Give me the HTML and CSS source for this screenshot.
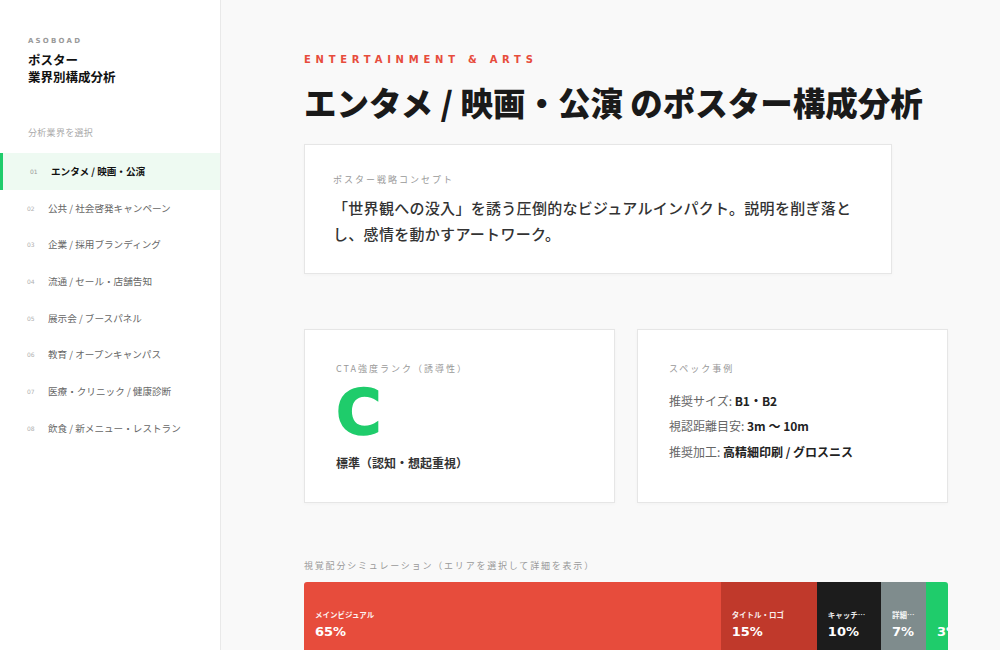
FILE: index.html
```html
<!DOCTYPE html>
<html lang="ja">
<head>
<meta charset="utf-8">
<title>ポスター 業界別構成分析</title>
<link rel="stylesheet" href="styles.css">
</head>
<body>
<div class="app">
  <aside class="sidebar">
    <div class="brand">ASOBOAD</div>
    <h1 class="app-title">ポスター<br>業界別構成分析</h1>
    <div class="nav-label">分析業界を選択</div>
    <nav class="nav">
      <a class="nav-item active"><span class="nav-num">01</span><span class="nav-text">エンタメ / 映画・公演</span></a>
      <a class="nav-item"><span class="nav-num">02</span><span class="nav-text">公共 / 社会啓発キャンペーン</span></a>
      <a class="nav-item"><span class="nav-num">03</span><span class="nav-text">企業 / 採用ブランディング</span></a>
      <a class="nav-item"><span class="nav-num">04</span><span class="nav-text">流通 / セール・店舗告知</span></a>
      <a class="nav-item"><span class="nav-num">05</span><span class="nav-text">展示会 / ブースパネル</span></a>
      <a class="nav-item"><span class="nav-num">06</span><span class="nav-text">教育 / オープンキャンパス</span></a>
      <a class="nav-item"><span class="nav-num">07</span><span class="nav-text">医療・クリニック / 健康診断</span></a>
      <a class="nav-item"><span class="nav-num">08</span><span class="nav-text">飲食 / 新メニュー・レストラン</span></a>
    </nav>
  </aside>

  <main class="main">
    <div class="content">
      <div class="eyebrow">ENTERTAINMENT &amp; ARTS</div>
      <h2 class="page-title">エンタメ / 映画・公演 のポスター構成分析</h2>

      <section class="card concept">
        <div class="card-label">ポスター戦略コンセプト</div>
        <p class="concept-text">「世界観への没入」を誘う圧倒的なビジュアルインパクト。説明を削ぎ落とし、感情を動かすアートワーク。</p>
      </section>

      <div class="grid">
        <section class="card metric">
          <div class="card-label">CTA強度ランク（誘導性）</div>
          <div class="rank">C</div>
          <div class="rank-note">標準（認知・想起重視）</div>
        </section>
        <section class="card metric">
          <div class="card-label">スペック事例</div>
          <ul class="spec-list">
            <li>推奨サイズ: <strong>B1・B2</strong></li>
            <li>視認距離目安: <strong>3m 〜 10m</strong></li>
            <li>推奨加工: <strong>高精細印刷 / グロスニス</strong></li>
          </ul>
        </section>
      </div>

      <div class="sim-label">視覚配分シミュレーション（エリアを選択して詳細を表示）</div>
      <div class="bar">
        <div class="seg seg-main" style="width:65%"><span class="seg-name">メインビジュアル</span><span class="seg-val">65%</span></div>
        <div class="seg seg-title" style="width:15%"><span class="seg-name">タイトル・ロゴ</span><span class="seg-val">15%</span></div>
        <div class="seg seg-catch" style="width:10%"><span class="seg-name">キャッチコピー</span><span class="seg-val">10%</span></div>
        <div class="seg seg-detail" style="width:7%"><span class="seg-name">詳細情報</span><span class="seg-val">7%</span></div>
        <div class="seg seg-cta" style="width:3%"><span class="seg-name">CTA</span><span class="seg-val">3%</span></div>
      </div>
    </div>
  </main>
</div>
</body>
</html>
```

FILE: styles.css
```css
* {
  box-sizing: border-box;
}

html,
body {
  margin: 0;
  height: 100%;
  overflow: hidden;
}

body {
  font-family: "Noto Sans CJK JP", "Noto Sans", sans-serif;
  color: #222;
  background: #f9f9f9;
}

.app {
  display: flex;
  height: 100%;
}

/* ---------- sidebar ---------- */
.sidebar {
  width: 221px;
  flex: none;
  background: #fff;
  border-right: 1px solid #e9e9e9;
  padding-top: 36px;
}

.brand {
  padding-left: 28px;
  font-family: "DejaVu Sans", sans-serif;
  font-weight: 700;
  font-size: 7px;
  line-height: 11px;
  letter-spacing: 2.2px;
  color: #9a9a9a;
}

.app-title {
  margin: 4px 0 0;
  padding-left: 28px;
  font-size: 12.5px;
  line-height: 17px;
  font-weight: 700;
  color: #111;
}

.nav-label {
  margin-top: 41px;
  padding-left: 28px;
  font-size: 9px;
  line-height: 13px;
  color: #aaa;
  letter-spacing: 0.3px;
}

.nav {
  margin-top: 14px;
  display: flex;
  flex-direction: column;
}

.nav-item {
  display: flex;
  align-items: center;
  gap: 12px;
  padding: 11.85px 0 11.85px 27px;
  line-height: 13px;
  color: #666;
  cursor: pointer;
}

.nav-num {
  width: 9px;
  font-family: "DejaVu Sans", sans-serif;
  font-size: 6px;
  color: #b0b0b0;
}

.nav-text {
  font-size: 9.6px;
  white-space: nowrap;
}

.nav-item.active {
  background: #eefaf2;
  border-left: 3px solid #1fcc6b;
  color: #111;
}

.nav-item.active .nav-num {
  color: #999;
}

.nav-item.active .nav-text {
  font-weight: 700;
}

/* ---------- main ---------- */
.main {
  flex: 1;
  padding: 53px 0 0 83px;
  overflow: hidden;
}

.content {
  width: 644px;
}

.eyebrow {
  font-family: "DejaVu Sans", sans-serif;
  font-weight: 700;
  font-size: 10px;
  line-height: 14px;
  letter-spacing: 4.75px;
  color: #e74c3c;
}

.page-title {
  margin: 12px 0 20px;
  font-size: 32.5px;
  line-height: 45px;
  font-weight: 900;
  color: #1a1a1a;
  white-space: nowrap;
}

.card {
  background: #fff;
  border: 1px solid #e6e6e6;
  box-shadow: 0 1px 4px rgba(0, 0, 0, 0.03);
}

.card-label {
  font-size: 9px;
  line-height: 13px;
  letter-spacing: 2px;
  color: #999;
}

.concept {
  width: 588px;
  padding: 28px 28px 27px;
}

.concept-text {
  margin: 9px 0 0;
  font-size: 15px;
  line-height: 25.5px;
  letter-spacing: 0.3px;
  font-weight: 500;
  color: #333;
}

.grid {
  margin-top: 55px;
  display: grid;
  grid-template-columns: 1fr 1fr;
  gap: 22px;
}

.metric {
  padding: 32px 31px 30px;
}

.rank {
  margin-top: 7px;
  font-family: "DejaVu Sans", sans-serif;
  font-weight: 700;
  font-size: 62px;
  line-height: 62px;
  color: #1fcc6b;
  -webkit-text-stroke: 1.5px #1fcc6b;
}

.rank-note {
  margin-top: 10px;
  font-size: 12px;
  line-height: 18px;
  font-weight: 700;
  color: #333;
}

.spec-list {
  list-style: none;
  margin: 16.5px 0 0;
  padding: 0;
  display: flex;
  flex-direction: column;
  gap: 7.5px;
}

.spec-list li {
  font-size: 12px;
  line-height: 18px;
  color: #666;
}

.spec-list strong {
  font-weight: 700;
  color: #222;
}

.sim-label {
  margin-top: 56px;
  font-size: 9px;
  line-height: 13px;
  letter-spacing: 1.8px;
  color: #999;
}

.bar {
  margin-top: 10px;
  display: flex;
  height: 86px;
  border-radius: 3px 3px 0 0;
  overflow: hidden;
}

.seg {
  display: flex;
  flex-direction: column;
  justify-content: center;
  padding: 0 11px;
  color: #fff;
  overflow: hidden;
  min-width: 0;
}

.seg-name {
  font-size: 7.5px;
  line-height: 12px;
  font-weight: 700;
  opacity: 0.92;
  white-space: nowrap;
  overflow: hidden;
  text-overflow: ellipsis;
}

.seg-val {
  margin-top: 2px;
  font-family: "DejaVu Sans", sans-serif;
  font-weight: 700;
  font-size: 13px;
  line-height: 18px;
  white-space: nowrap;
}

.seg-main { background: #e74c3c; }
.seg-title { background: #c0392b; }
.seg-catch { background: #1c1c1c; }
.seg-detail { background: #7f8c8d; }
.seg-cta { background: #1fcc6b; }
```
